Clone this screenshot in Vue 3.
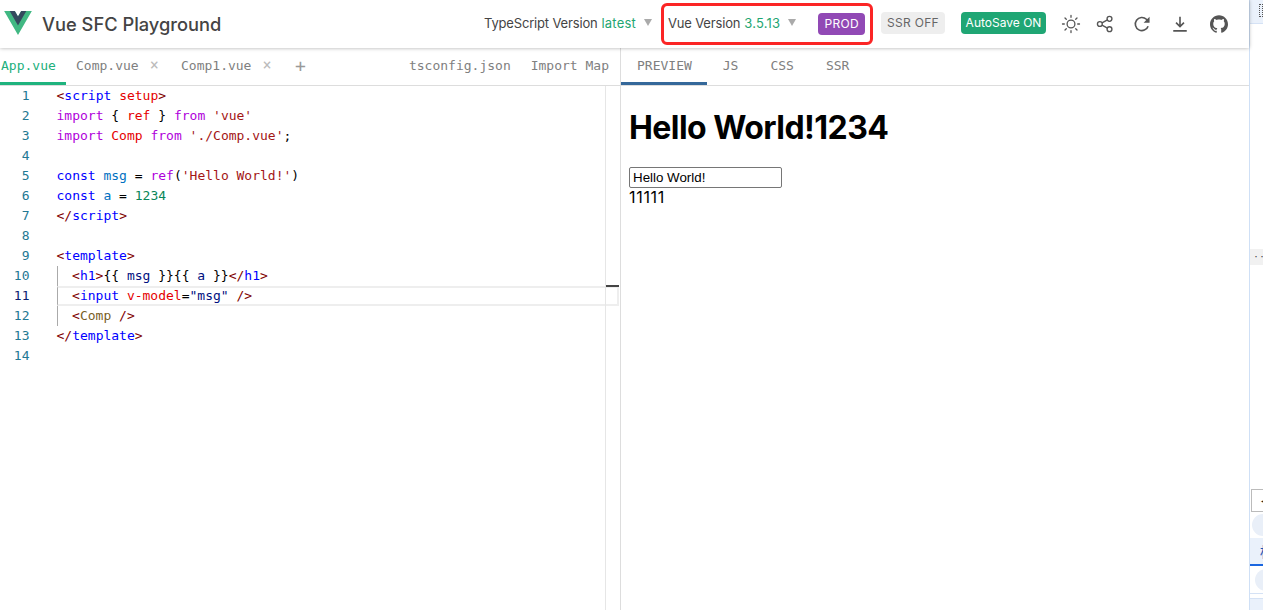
<script setup>
const files = [
  { name: 'App.vue', active: true },
  { name: 'Comp.vue', close: true },
  { name: 'Comp1.vue', close: true },
]
const outputs = ['PREVIEW', 'JS', 'CSS', 'SSR']
const nums = Array.from({ length: 14 }, (_, i) => i + 1)
</script>

<template>
  <div class="page">
    <div class="main">
      <header class="nav">
        <svg class="logo" viewBox="0 0 261.76 226.69" aria-hidden="true">
          <path fill="#41b883" d="M161.096.001l-30.225 52.351L100.647.001H-.005l130.877 226.688L261.749.001z" />
          <path fill="#34495e" d="M161.096.001l-30.225 52.351L100.647.001H52.346l78.526 136.01L209.398.001z" />
        </svg>
        <h1 class="title">Vue SFC Playground</h1>
        <div class="ts-version">
          <span class="lbl">TypeScript Version</span>
          <span class="ver">latest</span>
          <i class="caret"></i>
        </div>
        <div class="highlight">
          <span class="lbl">Vue Version</span>
          <span class="ver">3.5.13</span>
          <i class="caret"></i>
          <span class="pill prod">PROD</span>
        </div>
        <span class="pill ssr">SSR OFF</span>
        <span class="pill save">AutoSave ON</span>
        <div class="icons">
          <svg class="ic sun" viewBox="0 0 20 20" fill="none" stroke="#555" stroke-width="1.3" stroke-linecap="round">
            <circle cx="10" cy="10" r="3.9" />
            <path d="M10 1.5v1.8M10 16.7v1.8M1.5 10h1.8M16.7 10h1.8M4 4l1.3 1.3M14.7 14.7L16 16M4 16l1.3-1.3M14.7 5.3L16 4" />
          </svg>
          <svg class="ic share" viewBox="0 0 20 20" fill="none" stroke="#555" stroke-width="1.5">
            <circle cx="15" cy="4.3" r="2.7" />
            <circle cx="4.3" cy="10" r="2.7" />
            <circle cx="15" cy="15.7" r="2.7" />
            <path d="M6.7 8.7l6-3.2M6.7 11.3l6 3.2" />
          </svg>
          <svg class="ic reload" viewBox="0 0 20 20" fill="none" stroke="#555" stroke-width="1.8">
            <path d="M16.8 12.4A7.3 7.3 0 1 1 14.9 4.7L17 6.8" />
            <path fill="#555" stroke="none" d="M18.4 1.9v6.6h-6.6z" />
          </svg>
          <svg class="ic download" viewBox="0 0 20 20" fill="none" stroke="#555" stroke-width="1.8">
            <path d="M10 2v10.5M5.6 8.4l4.4 4.4 4.4-4.4M2.5 17.6h15" />
          </svg>
          <svg class="ic github" viewBox="0 0 24 24">
            <path fill="#555" d="M12 .297c-6.63 0-12 5.373-12 12 0 5.303 3.438 9.8 8.205 11.385.6.113.82-.258.82-.577 0-.285-.01-1.04-.015-2.04-3.338.724-4.042-1.61-4.042-1.61C4.422 18.07 3.633 17.7 3.633 17.7c-1.087-.744.084-.729.084-.729 1.205.084 1.838 1.236 1.838 1.236 1.07 1.835 2.809 1.305 3.495.998.108-.776.417-1.305.76-1.605-2.665-.3-5.466-1.332-5.466-5.93 0-1.31.465-2.38 1.235-3.22-.135-.303-.54-1.523.105-3.176 0 0 1.005-.322 3.3 1.23.96-.267 1.98-.399 3-.405 1.02.006 2.04.138 3 .405 2.28-1.552 3.285-1.23 3.285-1.23.645 1.653.24 2.873.12 3.176.765.84 1.23 1.91 1.23 3.22 0 4.61-2.805 5.625-5.475 5.92.42.36.81 1.096.81 2.22 0 1.606-.015 2.896-.015 3.286 0 .315.21.69.825.57C20.565 22.092 24 17.592 24 12.297c0-6.627-5.373-12-12-12" />
          </svg>
        </div>
      </header>

      <div class="split">
        <section class="left">
          <div class="tabs">
            <div v-for="f in files" :key="f.name" class="tab" :class="{ active: f.active }">
              <span>{{ f.name }}</span>
              <span v-if="f.close" class="x">×</span>
            </div>
            <span class="add">+</span>
            <span class="spacer"></span>
            <span class="extra ts">tsconfig.json</span>
            <span class="extra">Import Map</span>
          </div>
          <div class="editor">
            <div class="gutter">
              <div v-for="n in nums" :key="n" class="ln" :class="{ cur: n === 11 }">{{ n }}</div>
            </div>
            <div class="code">
              <div class="line"><span class="tg">&lt;</span><span class="bl">script</span> <span class="rd">setup</span><span class="tg">&gt;</span></div>
              <div class="line"><span class="pu">import</span> { <span class="rd">ref</span> } <span class="pu">from</span> <span class="st">'vue'</span></div>
              <div class="line"><span class="pu">import</span> <span class="rd">Comp</span> <span class="pu">from</span> <span class="st">'./Comp.vue'</span>;</div>
              <div class="line"></div>
              <div class="line"><span class="bl">const</span> <span class="cy">msg</span> = <span class="pu">ref</span>(<span class="st">'Hello World!'</span>)</div>
              <div class="line"><span class="bl">const</span> <span class="cy">a</span> = <span class="gn">1234</span></div>
              <div class="line"><span class="tg">&lt;/</span><span class="bl">script</span><span class="tg">&gt;</span></div>
              <div class="line"></div>
              <div class="line"><span class="tg">&lt;</span><span class="bl">template</span><span class="tg">&gt;</span></div>
              <div class="line in"><span class="tg">&lt;</span><span class="bl">h1</span><span class="tg">&gt;</span>{{ '\{\{' }} <span class="nv">msg</span> {{ '\}\}\{\{' }} <span class="nv">a</span> {{ '\}\}' }}<span class="tg">&lt;/</span><span class="bl">h1</span><span class="tg">&gt;</span></div>
              <div class="line in cur"><span class="tg">&lt;</span><span class="bl">input</span> <span class="rd">v-model</span>=<span class="nv">"msg"</span> <span class="tg">/&gt;</span></div>
              <div class="line in"><span class="tg">&lt;</span><span class="br">Comp</span> <span class="tg">/&gt;</span></div>
              <div class="line"><span class="tg">&lt;/</span><span class="bl">template</span><span class="tg">&gt;</span></div>
              <div class="line"></div>
            </div>
            <div class="scroll"><i class="mark"></i></div>
          </div>
        </section>

        <section class="right">
          <div class="tabs">
            <div v-for="(o, i) in outputs" :key="o" class="otab" :class="{ on: i === 0 }">{{ o }}</div>
          </div>
          <div class="preview">
            <h2 class="hello">Hello World!1234</h2>
            <input class="field" value="Hello World!" />
            <div class="ones">11111</div>
          </div>
        </section>
      </div>
    </div>

    <aside class="strip">
      <div class="s-top"><i class="s-dots"></i></div>
      <div class="s-more">•••</div>
      <div class="s-box">◂</div>
      <div class="s-round"><span>‹</span></div>
      <div class="s-tab">标</div>
      <div class="s-round two"></div>
      <div class="s-last"></div>
    </aside>
  </div>
</template>

<style>
html, body { margin: 0; background: #fff; overflow: hidden; }
</style>

<style scoped>
.page {
  display: flex;
  width: 1263px;
  height: 610px;
  overflow: hidden;
  font-family: Inter, "Liberation Sans", sans-serif;
  color: #333;
}
.main { width: 1249px; display: flex; flex-direction: column; flex: none; }
.nav {
  height: 48px;
  flex: none;
  box-sizing: border-box;
  display: flex;
  align-items: center;
  padding-left: 4px;
  box-shadow: 0 0 4px rgba(0, 0, 0, .33);
  position: relative;
  z-index: 2;
  background: #fff;
  font-size: 13px;
  color: #444;
}
.logo { width: 28px; height: 24px; margin-top: -2px; flex: none; }
.title {
  margin: 0 0 0 10px;
  font-size: 18.3px;
  font-weight: 500;
  color: #444;
  white-space: nowrap;
  width: 442px;
  flex: none;
}
.ts-version { display: flex; align-items: center; white-space: nowrap; gap: 4px; margin-top: -2px; flex: none; }
.lbl { letter-spacing: -.17px; }
.ver { color: #1ea672; letter-spacing: .2px; }
.caret {
  display: block;
  width: 0; height: 0;
  border-left: 4.5px solid transparent;
  border-right: 4.5px solid transparent;
  border-top: 7px solid #aaa;
  margin: -2px 0 0 4px;
}
.highlight {
  display: flex;
  align-items: center;
  gap: 4px;
  box-sizing: border-box;
  width: 212px;
  height: 42px;
  margin-left: 9px;
  padding: 0 0 2px 4px;
  border: 3px solid #fb2525;
  border-radius: 6px;
  white-space: nowrap;
  flex: none;
}
.highlight .caret { margin-right: 18px; }
.pill {
  display: block;
  height: 22px;
  line-height: 21px;
  border-radius: 4px;
  font-size: 12px;
  text-align: center;
  white-space: nowrap;
  flex: none;
  box-sizing: border-box;
}
.prod { width: 47px; background: #9149b5; color: #fff; margin-bottom: -1px; letter-spacing: .3px; }
.ssr { width: 64px; background: #eee; color: #666; margin: -2px 0 0 8px; letter-spacing: .3px; }
.save { width: 85px; background: #1fa674; color: #fff; margin: -2px 0 0 16px; }
.icons { display: flex; align-items: center; margin-left: 15px; }
.ic { display: block; flex: none; }
.sun { width: 20px; height: 20px; }
.share { width: 18px; height: 18px; margin-left: 15px; }
.reload { width: 18px; height: 18px; margin-left: 19.5px; }
.download { width: 18px; height: 18px; margin-left: 20px; }
.github { width: 18px; height: 18px; margin-left: 20.5px; }

.split { flex: 1; display: flex; min-height: 0; }
.left {
  width: 621px;
  flex: none;
  box-sizing: border-box;
  border-right: 1px solid #ddd;
  display: flex;
  flex-direction: column;
}
.right { flex: 1; display: flex; flex-direction: column; }
.tabs {
  height: 38px;
  box-sizing: border-box;
  flex: none;
  display: flex;
  border-bottom: 1px solid #ddd;
  font-family: "DejaVu Sans Mono", monospace;
  font-size: 13px;
  color: #808080;
  line-height: 35px;
}
.tab {
  height: 37px;
  box-sizing: border-box;
  padding: 0 10px 0 1px;
  white-space: nowrap;
  display: flex;
}
.tab.active { color: #22b07c; border-bottom: 3px solid #1fb37e; width: 66px; padding-right: 0; }
.tab + .tab { padding-left: 10px; padding-right: 0; width: 105px; }
.tab + .tab + .tab { width: 115px; padding-left: 10px; }
.x { color: #bbb; margin-left: 11px; font-size: 15px; }
.add { color: #999; font-size: 18px; margin-left: 9px; }
.spacer { flex: 1; }
.extra { margin-right: 11px; white-space: nowrap; }
.extra.ts { margin-right: 20px; margin-left: -1px; }
.editor { flex: 1; display: flex; min-height: 0; font-family: "DejaVu Sans Mono", monospace; font-size: 13px; line-height: 20px; }
.gutter { width: 56.5px; flex: none; padding-right: 27px; box-sizing: border-box; text-align: right; color: #237893; }
.ln.cur { color: #0b216f; }
.code { flex: 1; color: #000; min-width: 0; position: relative; white-space: pre; }
.line { height: 20px; box-sizing: border-box; }
.line.in { padding-left: 14.6px; border-left: 1px solid #aaa; }
.line.cur { border-top: 2px solid #eee; border-bottom: 2px solid #eee; border-right: 2px solid #eee; line-height: 16px; margin-right: -13.5px; }
.tg { color: #800000; }
.bl { color: #0000ff; }
.rd { color: #e50000; }
.pu { color: #af00db; }
.st { color: #a31515; }
.cy { color: #0070c1; }
.gn { color: #098658; }
.nv { color: #001080; }
.br { color: #795e26; }
.scroll { width: 15px; flex: none; border-left: 1px solid #e6e6e6; box-sizing: border-box; position: relative; }
.mark { position: absolute; left: 0; top: 199px; width: 13px; height: 2px; background: #444; }
.otab {
  height: 37px;
  box-sizing: border-box;
  padding: 0 16px;
  line-height: 36px;
}
.otab.on { border-bottom: 3px solid #35689a; padding: 0 15px 0 16px; }
.preview { padding: 8px; font-family: Inter, "Liberation Sans", sans-serif; color: #000; }
.hello { margin: 14.5px 0 21.5px; font-size: 32px; line-height: 37px; font-weight: 700; letter-spacing: -.55px; }
.field {
  display: block;
  box-sizing: border-box;
  width: 153px;
  height: 21px;
  padding: 1px 3px;
  border: 1px solid #767676;
  border-radius: 2px;
  font-family: "Liberation Sans", sans-serif;
  font-size: 13.33px;
  color: #000;
  outline: none;
}
.ones { font-size: 16px; line-height: 19px; font-family: Inter, sans-serif; letter-spacing: .7px; }

.strip { width: 14px; flex: none; box-sizing: border-box; border-left: 1px solid #cfe0f6; display: flex; flex-direction: column; background: #fff; font-family: "Noto Sans CJK SC", sans-serif; }
.s-top { height: 24px; background: #eaf1fb; flex: none; border-bottom: 1px solid #d5e2f5; box-sizing: border-box; padding: 4px 0 0 9px; }
.s-dots { display: block; width: 4px; height: 13px; border: 1px dotted #555; box-sizing: border-box; }
.s-more { height: 16px; margin-top: 225px; background: #f1f1f1; font-size: 6px; line-height: 16px; padding-left: 3px; color: #333; white-space: nowrap; overflow: hidden; flex: none; }
.s-box { height: 23px; margin-top: 224px; margin-left: 1px; border: 1px solid #bbb; background: #fff; border-right: 0; box-sizing: border-box; font-size: 10px; line-height: 20px; padding-left: 9px; color: #222; flex: none; }
.s-round { height: 26px; padding-left: 2px; display: flex; align-items: center; flex: none; }
.s-round span, .s-round.two::before { content: ""; display: block; width: 22px; height: 22px; border-radius: 50%; background: #e9eff8; color: #888; font-size: 12px; line-height: 22px; text-align: right; flex: none; }
.s-tab { height: 28px; background: #eaf1fb; border-bottom: 2px solid #1a66e0; box-sizing: border-box; font-size: 14px; line-height: 26px; padding-left: 10px; color: #1a55b8; white-space: nowrap; overflow: hidden; flex: none; }
.s-round.two { height: 27px; padding-left: 5px; border-bottom: 1px solid #d5e2f5; }
.s-last { flex: 1; margin-top: 4px; background: #eaf1fb; border-top: 1px solid #d5e2f5; }
</style>
